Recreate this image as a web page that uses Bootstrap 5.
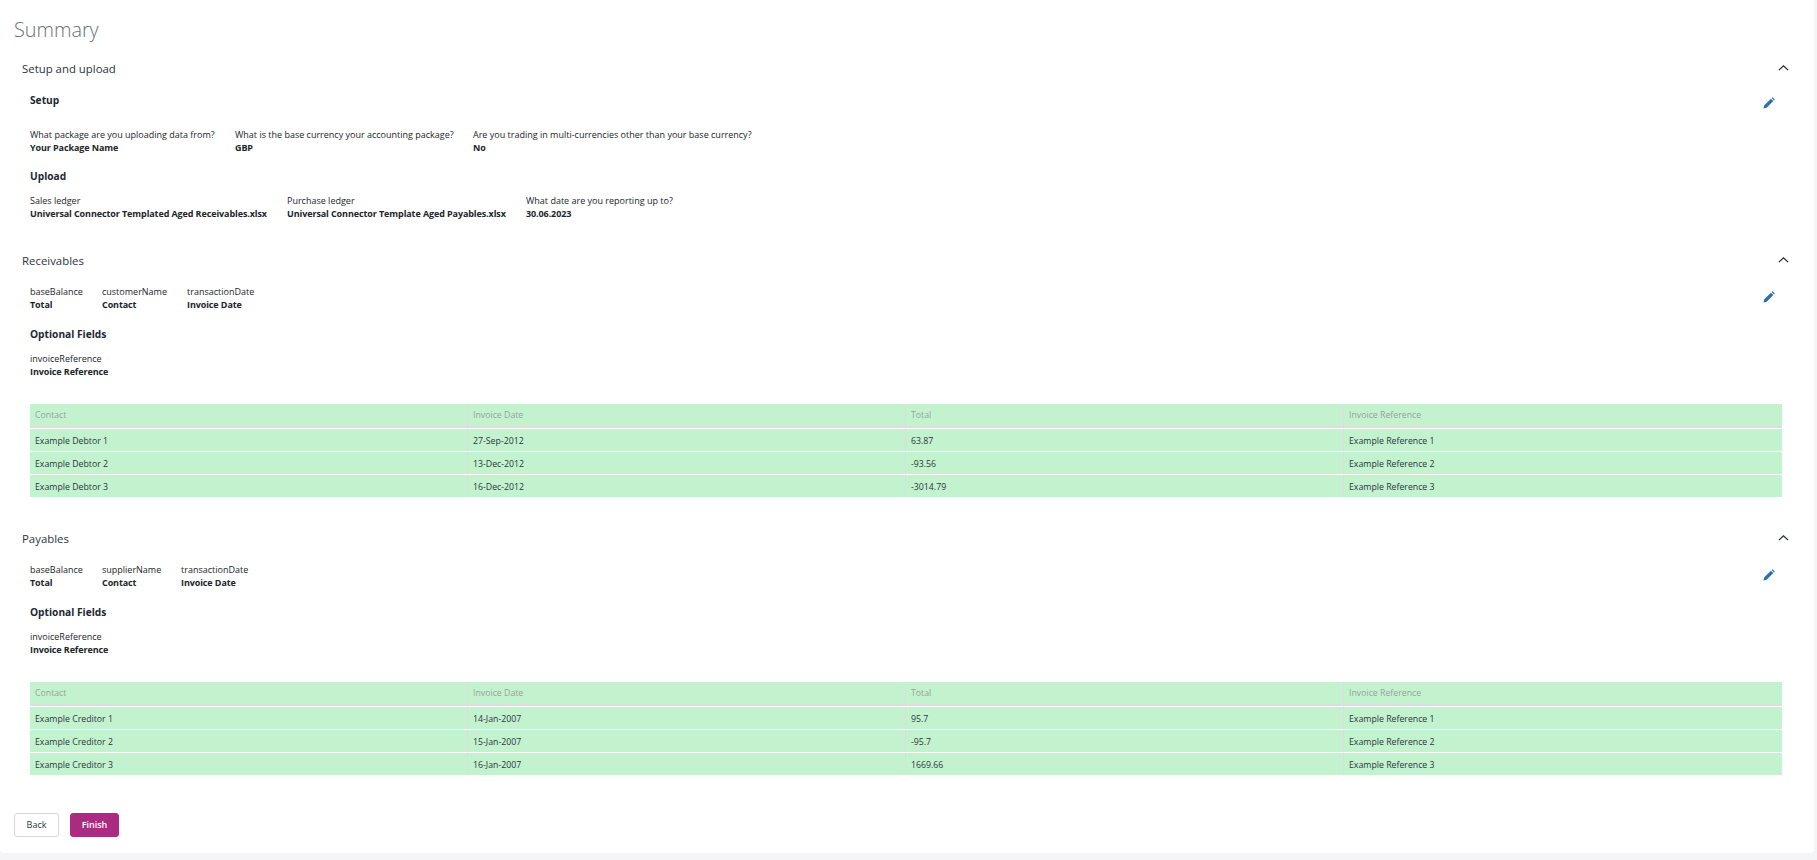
<!DOCTYPE html>
<html lang="en">
<head>
<meta charset="utf-8">
<title>Summary</title>
<link href="https://cdn.jsdelivr.net/npm/bootstrap@5.3.0/dist/css/bootstrap.min.css" rel="stylesheet">
<style>
html,body{height:860px;overflow:hidden}
body{background:#f4f5f7;font-family:"Open Sans","Noto Sans",sans-serif;color:#1d2733;font-size:9px}
.sheet{width:1814px;background:#fff;padding:0 14px 16px;border-bottom-right-radius:4px;border-bottom-left-radius:4px}
.page-title{font-size:19.8px;font-weight:300;color:#6a6f76;line-height:28px;margin:0;padding:16px 0 10px}
.acc-flat{--bs-accordion-border-width:0;--bs-accordion-bg:#fff;--bs-accordion-active-bg:#fff;--bs-accordion-active-color:#2b3440;--bs-accordion-btn-focus-box-shadow:none;--bs-accordion-btn-icon-width:11px;--bs-accordion-btn-padding-x:8px;--bs-accordion-btn-padding-y:0;--bs-accordion-btn-icon:url("data:image/svg+xml,%3csvg xmlns='http://www.w3.org/2000/svg' viewBox='0 0 12 7'%3e%3cpath d='M1 6l5-5 5 5' fill='none' stroke='%231d2733' stroke-width='1.3'/%3e%3c/svg%3e");--bs-accordion-btn-active-icon:url("data:image/svg+xml,%3csvg xmlns='http://www.w3.org/2000/svg' viewBox='0 0 12 7'%3e%3cpath d='M1 1l5 5 5-5' fill='none' stroke='%231d2733' stroke-width='1.3'/%3e%3c/svg%3e")}
.acc-flat .accordion-button{height:30px;font-size:11.4px;color:#2b3440;padding-right:11px;box-shadow:none}
.acc-flat .accordion-button::after{margin-top:-7px}
.acc-flat .accordion-body{padding:8px 18px 0 16px;position:relative}
.acc-gap{margin-bottom:26.5px}
.acc-gap-lg{margin-bottom:27px}
.body-tight{padding-top:8.5px!important}
.sub-title{font-size:10.2px;font-weight:700;line-height:16px;margin:0;color:#1d2733}
.field-row{display:flex;line-height:13px}
.field-row b{display:block;font-weight:700;letter-spacing:-.1px}
.edit-mark{position:absolute;right:25px;top:13px;width:12px;height:12px;line-height:0}
.edit-low{top:15px}
.mt-a{margin-top:19.5px}.mt-b{margin-top:14.5px}.mt-c{margin-top:9.5px}.mt-d{margin-top:15.5px}
.data-grid{margin:26.5px 0 0;table-layout:fixed;border-collapse:separate;border-spacing:0;width:100%;font-size:8.75px}
.data-grid th,.data-grid td{background:#c3f3ce;box-shadow:none;padding:0 5px;line-height:22px;height:23px;border:0;border-right:1px solid #ddd;border-bottom:1px solid #fff;font-weight:400;color:#2b3440;vertical-align:middle}
.data-grid td{line-height:20px;padding-top:2px}
.data-grid th{color:#9a9f9f;height:24px;border-bottom:2px solid #ddd}
.data-grid th:last-child,.data-grid td:last-child{border-right:0}
.data-grid tbody tr:first-child td{height:24px;border-top:1px solid #fff}
.data-grid tbody tr:last-child td{border-bottom:0;height:22px}
.action-row{margin-top:38px;gap:11px}
.btn-back,.btn-finish{font-size:9px;height:24px;padding:0;line-height:22px;border-radius:3px}
.btn-back{width:45px;background:#fff;border:1px solid #d8d8d8;color:#2b3440}
.btn-finish{width:49px;background:#a92c80;border:1px solid #a92c80;color:#fff;font-weight:600}
.w-a{width:205px}.w-b{width:238px}.w-c{width:257px}.w-d{width:239px}.w-e{width:72px}.w-f{width:85px}.w-g{width:79px}
</style>
</head>
<body>
<main class="sheet">
  <h1 class="page-title">Summary</h1>
  <div class="accordion acc-flat">
    <div class="accordion-item acc-gap">
      <h2 class="accordion-header"><button class="accordion-button" type="button">Setup and upload</button></h2>
      <div class="accordion-collapse collapse show"><div class="accordion-body">
        <svg class="edit-mark" viewBox="0 0 12 12"><path d="M0.5 11.5l.8-3.2 6.6-6.6 2.4 2.4-6.6 6.6z M8.6 1l1-.8 2.2 2.2-.8 1z" fill="#2f6fab"/></svg>
        <h3 class="sub-title">Setup</h3>
        <div class="field-row mt-a"><div class="w-a">What package are you uploading data from?<b>Your Package Name</b></div><div class="w-b">What is the base currency your accounting package?<b>GBP</b></div><div>Are you trading in multi-currencies other than your base currency?<b>No</b></div></div>
        <h3 class="sub-title mt-b">Upload</h3>
        <div class="field-row mt-c"><div class="w-c">Sales ledger<b>Universal Connector Templated Aged Receivables.xlsx</b></div><div class="w-d">Purchase ledger<b>Universal Connector Template Aged Payables.xlsx</b></div><div>What date are you reporting up to?<b>30.06.2023</b></div></div>
      </div></div>
    </div>
    <div class="accordion-item acc-gap-lg">
      <h2 class="accordion-header"><button class="accordion-button" type="button">Receivables</button></h2>
      <div class="accordion-collapse collapse show"><div class="accordion-body body-tight">
        <svg class="edit-mark edit-low" viewBox="0 0 12 12"><path d="M0.5 11.5l.8-3.2 6.6-6.6 2.4 2.4-6.6 6.6z M8.6 1l1-.8 2.2 2.2-.8 1z" fill="#2f6fab"/></svg>
        <div class="field-row"><div class="w-e">baseBalance<b>Total</b></div><div class="w-f">customerName<b>Contact</b></div><div>transactionDate<b>Invoice Date</b></div></div>
        <h3 class="sub-title mt-d">Optional Fields</h3>
        <div class="field-row mt-c"><div>invoiceReference<b>Invoice Reference</b></div></div>
        <table class="table data-grid">
          <thead><tr><th>Contact</th><th>Invoice Date</th><th>Total</th><th>Invoice Reference</th></tr></thead>
          <tbody>
            <tr><td>Example Debtor 1</td><td>27-Sep-2012</td><td>63.87</td><td>Example Reference 1</td></tr>
            <tr><td>Example Debtor 2</td><td>13-Dec-2012</td><td>-93.56</td><td>Example Reference 2</td></tr>
            <tr><td>Example Debtor 3</td><td>16-Dec-2012</td><td>-3014.79</td><td>Example Reference 3</td></tr>
          </tbody>
        </table>
      </div></div>
    </div>
    <div class="accordion-item">
      <h2 class="accordion-header"><button class="accordion-button" type="button">Payables</button></h2>
      <div class="accordion-collapse collapse show"><div class="accordion-body body-tight">
        <svg class="edit-mark edit-low" viewBox="0 0 12 12"><path d="M0.5 11.5l.8-3.2 6.6-6.6 2.4 2.4-6.6 6.6z M8.6 1l1-.8 2.2 2.2-.8 1z" fill="#2f6fab"/></svg>
        <div class="field-row"><div class="w-e">baseBalance<b>Total</b></div><div class="w-g">supplierName<b>Contact</b></div><div>transactionDate<b>Invoice Date</b></div></div>
        <h3 class="sub-title mt-d">Optional Fields</h3>
        <div class="field-row mt-c"><div>invoiceReference<b>Invoice Reference</b></div></div>
        <table class="table data-grid">
          <thead><tr><th>Contact</th><th>Invoice Date</th><th>Total</th><th>Invoice Reference</th></tr></thead>
          <tbody>
            <tr><td>Example Creditor 1</td><td>14-Jan-2007</td><td>95.7</td><td>Example Reference 1</td></tr>
            <tr><td>Example Creditor 2</td><td>15-Jan-2007</td><td>-95.7</td><td>Example Reference 2</td></tr>
            <tr><td>Example Creditor 3</td><td>16-Jan-2007</td><td>1669.66</td><td>Example Reference 3</td></tr>
          </tbody>
        </table>
      </div></div>
    </div>
  </div>
  <div class="d-flex action-row">
    <button class="btn btn-back" type="button">Back</button>
    <button class="btn btn-finish" type="button">Finish</button>
  </div>
</main>
<script src="https://cdn.jsdelivr.net/npm/bootstrap@5.3.0/dist/js/bootstrap.bundle.min.js"></script>
</body>
</html>
